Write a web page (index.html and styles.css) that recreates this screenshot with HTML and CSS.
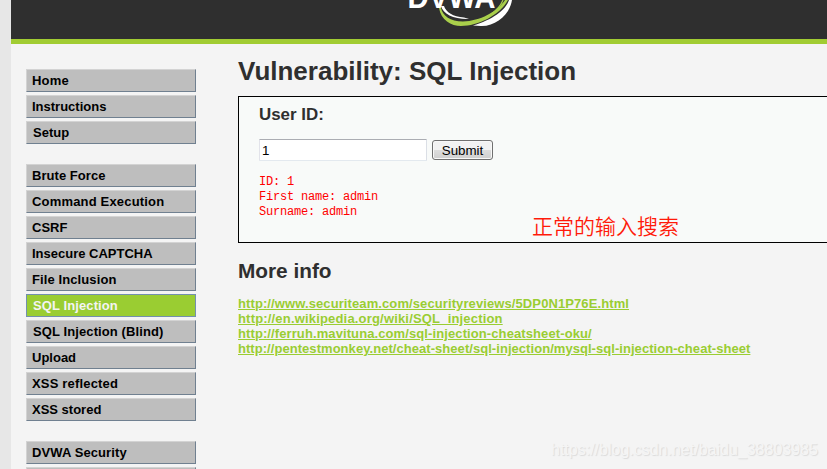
FILE: index.html
```html
<!DOCTYPE html>
<html lang="en">
<head>
<meta charset="utf-8">
<title>Vulnerability: SQL Injection</title>
<link rel="stylesheet" href="styles.css">
</head>
<body>
<div class="page">
  <header class="header">
    <svg class="logo" width="120" height="39" viewBox="400 0 120 39" role="img" aria-label="DVWA">
      <text class="logo-text" x="407.500" y="7.800" textLength="88" lengthAdjust="spacingAndGlyphs">DVWA</text>
      <path d="M441 6C443 14 454 19.500 469 19L464 17.500C453 17 446 12 444 6Z" fill="#fff"/>
      <path d="M439 8C441 20 451 26 461 26C478 26 500 15 508 0H505C497 12 480 21 463 21.500C450 21.500 443 16 441 8Z" fill="#a9cf4b"/>
      <path d="M473 25.500C492 20 506 10 509 0H512C510 14 496 26.500 481 26Z" fill="#fff"/>
      <path d="M491 14C497 10 501 5 503 0" fill="none" stroke="#a9cf4b" stroke-width="1.200"/>
    </svg>
  </header>
  <div class="columns">
    <nav class="menu">
      <ul>
        <li class="home">Home</li>
        <li>Instructions</li>
        <li class="nudge">Setup</li>
      </ul>
      <ul>
        <li class="slight">Brute Force</li>
        <li class="wide">Command Execution</li>
        <li>CSRF</li>
        <li>Insecure CAPTCHA</li>
        <li class="loose">File Inclusion</li>
        <li class="selected nudge loose">SQL Injection</li>
        <li class="nudge loose">SQL Injection (Blind)</li>
        <li>Upload</li>
        <li class="wide">XSS reflected</li>
        <li>XSS stored</li>
      </ul>
      <ul>
        <li class="loose">DVWA Security</li>
        <li></li>
      </ul>
    </nav>
    <main class="main">
      <h1>Vulnerability: SQL Injection</h1>
      <section class="panel">
        <h3>User ID:</h3>
        <form class="form">
          <input type="text" value="1" aria-label="User ID">
          <button type="button">Submit</button>
        </form>
        <pre>ID: 1
First name: admin
Surname: admin</pre>
        <div class="note">正常的输入搜索</div>
      </section>
      <h2>More info</h2>
      <ul class="links">
        <li class="loose"><a href="#">http://www.securiteam.com/securityreviews/5DP0N1P76E.html</a></li>
        <li class="wide"><a href="#">http://en.wikipedia.org/wiki/SQL_injection</a></li>
        <li class="loose"><a href="#">http://ferruh.mavituna.com/sql-injection-cheatsheet-oku/</a></li>
        <li class="slight"><a href="#">http://pentestmonkey.net/cheat-sheet/sql-injection/mysql-sql-injection-cheat-sheet</a></li>
      </ul>
    </main>
  </div>
</div>
<div class="watermark">https://blog.csdn.net/baidu_38803985</div>
</body>
</html>
```
FILE: styles.css
```css
* { box-sizing: border-box; }
html, body { margin: 0; height: 469px; overflow: hidden; }
body {
  background: #e7e7e7;
  color: #2f2f2f;
  font-family: "Liberation Sans", Arial, sans-serif;
  font-size: 13px;
}
.page { margin-left: 11px; height: 469px; background: #f4f4f4; overflow: hidden; }
.header { height: 44px; background: #2f2f2f; border-bottom: 5px solid #a1cc33; }
.logo { display: block; margin-left: 389px; }
.logo-text { fill: #fff; font: bold 32px "Liberation Sans", Arial, sans-serif; }
.columns { display: flex; }
ul { list-style: none; margin: 0; padding: 0; }

.slight { letter-spacing: 0.05px; }
.loose { letter-spacing: 0.1px; }
.wide { letter-spacing: 0.18px; }

.menu { width: 170px; margin: 25px 0 0 15px; flex: none; }
.menu ul { display: flex; flex-direction: column; gap: 3px; margin-bottom: 20px; }
.menu li {
  height: 23px;
  padding-left: 5px;
  background: #bebebe;
  border: 1px solid;
  border-color: #d3d3d3 #708090 #708090 #d3d3d3;
  color: #000;
  font-weight: bold;
  line-height: 21px;
  white-space: nowrap;
}
.menu li.home { letter-spacing: 0.2px; }
.menu li.nudge { padding-left: 6px; }
.menu li.selected { background: #9acd32; border-color: #7390ae; color: #f4f4f4; }

.main { width: 620px; margin-left: 42px; flex: none; }
h1, h2, h3 { margin: 0; white-space: nowrap; }
h1 { height: 52px; padding-top: 12px; font-size: 26px; line-height: 30px; }
.panel {
  position: relative;
  height: 147px;
  padding-left: 20px;
  background: #f8faf9;
  border: 1px solid #000;
}
.panel h3 { padding-top: 8px; font-size: 16.9px; line-height: 20px; }
.form { display: flex; align-items: center; gap: 5px; height: 22px; margin-top: 14px; }
.form input {
  width: 168px;
  height: 22px;
  padding: 1px 2px;
  background: #fff;
  border: 1px solid #e3e9ef;
  border-color: #abadb3 #dbdfe6 #e3e9ef #e2e3ea;
  border-radius: 1px;
  color: #000;
  font: 13.333px "Liberation Sans", Arial, sans-serif;
}
.form button {
  width: 61px;
  height: 20px;
  padding: 1px 0 0;
  border: 1px solid #707070;
  border-radius: 3px;
  background: linear-gradient(#f2f2f2 0 50%, #dddddd 50%, #cfcfcf);
  box-shadow: inset 0 0 0 1px #f8f8f8;
  color: #000;
  font: 13.333px/17px "Liberation Sans", Arial, sans-serif;
}
pre {
  margin: 14px 0 0;
  color: #f00;
  font: 12px/15px "Liberation Mono", monospace;
  letter-spacing: -0.2px;
}
.note {
  position: absolute;
  left: 293px;
  top: 113px;
  color: #ff1a0a;
  font: 350 21px/30px "Noto Sans CJK SC", sans-serif;
  white-space: nowrap;
}
h2 { padding-top: 16px; font-size: 20.8px; line-height: 24px; }
.links { margin-top: 13px; line-height: 15px; }
.links a { color: #9acd32; font-weight: bold; white-space: nowrap; }
.watermark {
  position: absolute;
  left: 551px;
  top: 441px;
  color: #f5f5f5;
  font-size: 16px;
  line-height: 18px;
  text-shadow: 1px 1px 1px #dadada;
  white-space: nowrap;
}
```
